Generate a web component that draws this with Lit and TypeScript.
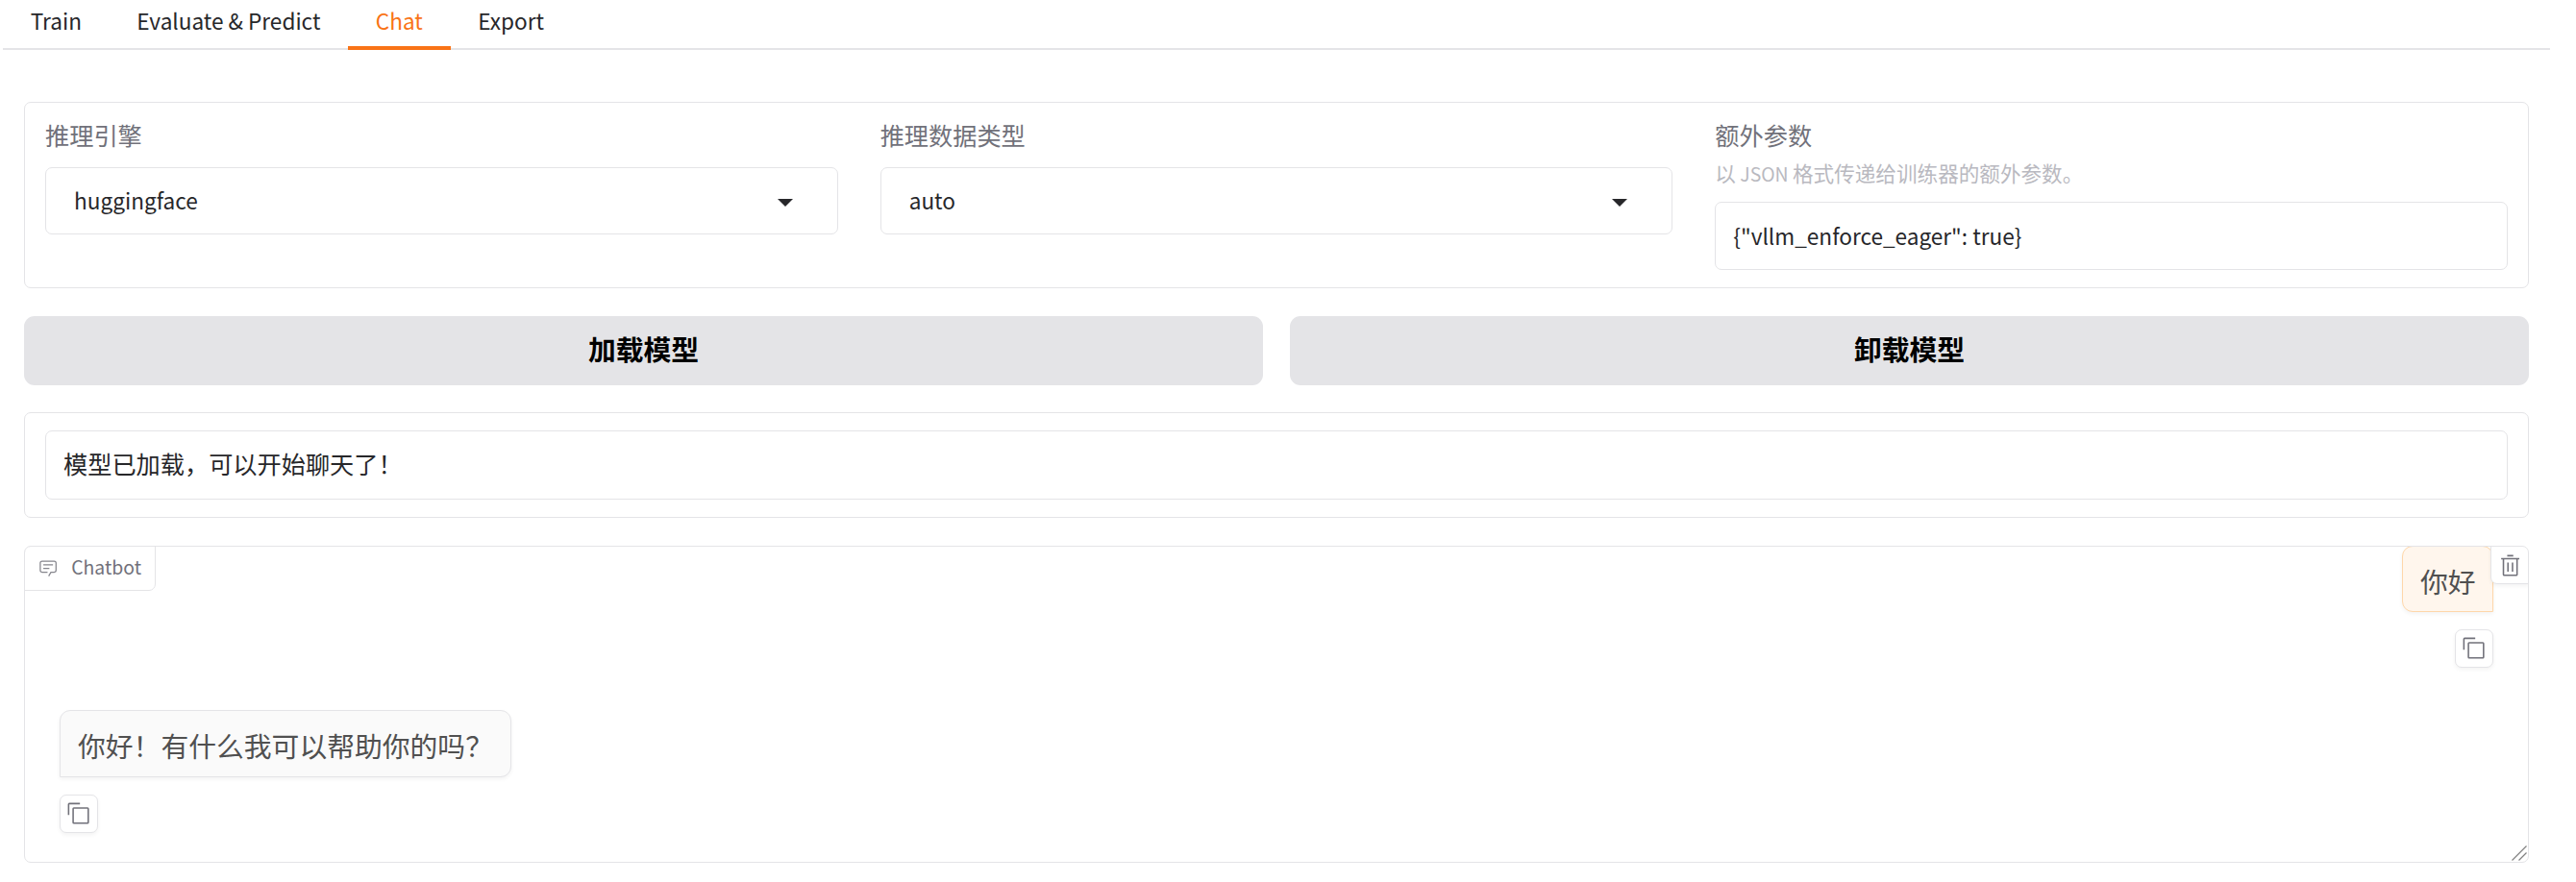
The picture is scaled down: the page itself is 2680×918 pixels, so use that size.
import { LitElement, html, svg, css } from 'lit';
import { customElement, property, state } from 'lit/decorators.js';
import { classMap } from 'lit/directives/class-map.js';

const ICONS = {
  chat: svg`
    <path d="M17.74 30L16 29l4-7h6a2 2 0 0 0 2-2V8a2 2 0 0 0-2-2H6a2 2 0 0 0-2 2v12a2 2 0 0 0 2 2h9v2H6a4 4 0 0 1-4-4V8a4 4 0 0 1 4-4h20a4 4 0 0 1 4 4v12a4 4 0 0 1-4 4h-4.84Z"/>
    <path d="M8 10h16v2H8zm0 6h10v2H8z"/>`,
  trash: svg`
    <path d="M12 12h2v12h-2zm6 0h2v12h-2z"/>
    <path d="M4 6v2h2v20a2 2 0 0 0 2 2h16a2 2 0 0 0 2-2V8h2V6zm4 22V8h16v20zm4-26h8v2h-8z"/>`,
  copy: svg`
    <path d="M28 10v18H10V10h18m0-2H10a2 2 0 0 0-2 2v18a2 2 0 0 0 2 2h18a2 2 0 0 0 2-2V10a2 2 0 0 0-2-2Z"/>
    <path d="M4 18H2V4a2 2 0 0 1 2-2h14v2H4Z"/>`
};

/**
 * Filled 32x32 grid icon, sized by its host
 */
@customElement('ui-icon')
class UiIcon extends LitElement {
  @property() name: keyof typeof ICONS = 'copy';

  static styles = css`
    :host {
      display: block;
      width: 25.2px;
      height: 25.2px;
    }

    svg {
      display: block;
      width: 100%;
      height: 100%;
    }
  `;

  render() {
    return html`<svg viewBox="0 0 32 32" fill="currentColor">${ICONS[this.name]}</svg>`;
  }
}

/**
 * Labelled form field, either a dropdown or a plain text box
 */
@customElement('form-field')
class FormField extends LitElement {
  @property() label = '';
  @property() value = '';
  @property({ type: Boolean }) dropdown = false;

  static styles = css`
    :host {
      display: block;
      min-width: 0;
    }

    .label {
      height: 26px;
      margin-bottom: 19px;
      font-size: 25.2px;
      line-height: 23px;
      color: var(--label);
    }

    .label.with-info {
      margin-bottom: 0;
    }

    .info {
      display: block;
      height: 55px;
      font-size: 21.6px;
      line-height: 50px;
      color: var(--info);
    }

    .box {
      display: flex;
      align-items: center;
      justify-content: space-between;
      box-sizing: border-box;
      height: 70px;
      padding: 0 18px;
      border: 1px solid var(--border);
      border-radius: 7px;
      font-size: var(--latin-md);
      color: var(--text);
    }

    .box.dropdown {
      padding: 0 46px 1px 29px;
    }

    .box.tall {
      height: 71px;
    }

    .box.cjk {
      height: 72px;
      padding-bottom: 5px;
      font-size: 25.2px;
    }

    .caret {
      width: 16px;
      height: 8px;
      margin-top: 5px;
    }
  `;

  render() {
    const hasInfo = this.querySelector('[slot=info]') !== null;
    const cjk = /[\u4e00-\u9fff]/.test(this.value);
    return html`
      ${this.label ? html`
        <div class=${classMap({ label: true, 'with-info': hasInfo })}>${this.label}</div>
      ` : ''}
      ${hasInfo ? html`<div class="info"><slot name="info"></slot></div>` : ''}
      <div class=${classMap({ box: true, dropdown: this.dropdown, tall: hasInfo, cjk })}>
        <span>${this.value}</span>
        ${this.dropdown ? html`
          <svg class="caret" viewBox="0 0 16 8" fill="currentColor"><path d="M0 0h16l-8 8z"/></svg>
        ` : ''}
      </div>
    `;
  }
}

/**
 * One chat bubble with its copy button
 */
@customElement('chat-message')
class ChatMessage extends LitElement {
  @property() text = '';
  @property() role = 'bot';

  static styles = css`
    .message {
      display: flex;
      flex-direction: column;
      align-items: flex-start;
      gap: 18px;
    }

    .message.user {
      align-items: flex-end;
    }

    .bubble {
      box-sizing: border-box;
      height: 70px;
      padding: 0 18px;
      border: 1px solid var(--border);
      border-radius: 11px 11px 11px 0;
      background: #fafafa;
      box-shadow: 0 2px 4px rgba(0, 0, 0, 0.05);
      font-size: 28.8px;
      line-height: 71px;
      color: #505050;
    }

    .user .bubble {
      height: 69px;
      padding: 0 17.5px;
      border-color: #fed7aa;
      border-radius: 11px 11px 0 11px;
      background: #fff6ed;
    }

    .copy {
      display: flex;
      align-items: center;
      justify-content: center;
      box-sizing: border-box;
      width: 40px;
      height: 40px;
      padding: 0;
      border: 1px solid var(--border);
      border-radius: 7px;
      background: #fff;
      box-shadow: 0 2px 4px rgba(0, 0, 0, 0.05);
      color: var(--label);
    }
  `;

  render() {
    return html`
      <div class="message ${this.role}">
        <div class="bubble">${this.text}</div>
        <button class="copy"><ui-icon name="copy"></ui-icon></button>
      </div>
    `;
  }
}

@customElement('app-root')
class AppRoot extends LitElement {
  @state() private activeTab = 'Chat';

  private tabs = ['Train', 'Evaluate & Predict', 'Chat', 'Export'];

  static styles = css`
    :host {
      --text: #27272a;
      --label: #71717a;
      --info: #b9b9c0;
      --border: #e4e4e7;
      --accent: #f97316;
      --latin-md: 22.6px;
      --latin-sm: 19.4px;
      display: block;
      box-sizing: border-box;
      height: 918px;
      overflow: hidden;
      background: #fff;
      font-family: 'Noto Sans CJK SC', sans-serif;
      color: var(--text);
    }

    button {
      font-family: inherit;
    }

    .tabs {
      display: flex;
      box-sizing: border-box;
      height: 52px;
      margin-left: 3px;
      margin-right: 27px;
      box-shadow: inset 0 -2px var(--border);
    }

    .tab {
      box-sizing: border-box;
      height: 52px;
      padding: 0 28.7px 4px;
      border: none;
      border-bottom: 4px solid transparent;
      background: none;
      font-size: var(--latin-md);
      line-height: 44px;
      color: var(--text);
    }

    .tab.selected {
      border-bottom-color: var(--accent);
      color: var(--accent);
    }

    .page {
      display: flex;
      flex-direction: column;
      padding: 54px 49px 0 25px;
    }

    .panel {
      box-sizing: border-box;
      border: 1px solid var(--border);
      border-radius: 7px;
    }

    .options {
      display: grid;
      grid-template-columns: repeat(3, 1fr);
      gap: 44px;
      height: 194px;
      padding: 22px 21px 0;
    }

    .actions {
      display: grid;
      grid-template-columns: 1fr 1fr;
      gap: 28px;
      margin: 29px 0 28px;
    }

    .action {
      height: 72px;
      padding: 0 0 5px;
      border: none;
      border-radius: 11px;
      background: #e4e4e7;
      font-size: 28.8px;
      font-weight: 700;
      color: #000;
    }

    .status {
      height: 110px;
      padding: 18px 21px;
    }

    .chatbot {
      position: relative;
      height: 330px;
      margin-top: 29px;
      overflow: hidden;
    }

    .chat-label {
      position: absolute;
      top: -1px;
      left: -1px;
      display: flex;
      align-items: center;
      gap: 14px;
      box-sizing: border-box;
      height: 47px;
      padding: 0 14px;
      border: 1px solid var(--border);
      border-radius: 7px 0 7px 0;
      font-size: var(--latin-sm);
      line-height: 42px;
      color: var(--label);
    }

    .chat-label span {
      padding-bottom: 3px;
    }

    .chat-label ui-icon {
      width: 20.2px;
      height: 20.2px;
      opacity: 0.85;
    }

    .clear {
      position: absolute;
      top: -1px;
      right: -1px;
      display: flex;
      align-items: center;
      justify-content: center;
      box-sizing: border-box;
      width: 40px;
      height: 40px;
      padding: 2px 0 0 1px;
      border: 1px solid var(--border);
      border-radius: 0 7px 0 7px;
      background: #fff;
      box-shadow: 0 2px 4px rgba(0, 0, 0, 0.05);
      color: var(--label);
    }

    .messages {
      display: flex;
      flex-direction: column;
      gap: 44px;
      margin-top: -1px;
      padding: 0 36px;
    }

    .resize {
      position: absolute;
      right: 0;
      bottom: 0;
      width: 18px;
      height: 18px;
    }

    .latin {
      font-size: var(--latin-sm);
    }
  `;

  private selectTab(tab: string) {
    this.activeTab = tab;
  }

  render() {
    return html`
      <nav class="tabs">
        ${this.tabs.map(tab => html`
          <button
            class=${classMap({ tab: true, selected: tab === this.activeTab })}
            @click=${() => this.selectTab(tab)}
          >${tab}</button>
        `)}
      </nav>

      <main class="page">
        <section class="panel options">
          <form-field label="推理引擎" value="huggingface" dropdown></form-field>
          <form-field label="推理数据类型" value="auto" dropdown></form-field>
          <form-field label="额外参数" value='{"vllm_enforce_eager": true}'>
            <span slot="info">以<span class="latin"> JSON </span>格式传递给训练器的额外参数。</span>
          </form-field>
        </section>

        <div class="actions">
          <button class="action">加载模型</button>
          <button class="action">卸载模型</button>
        </div>

        <section class="panel status">
          <form-field value="模型已加载，可以开始聊天了！"></form-field>
        </section>

        <section class="panel chatbot">
          <div class="messages">
            <chat-message role="user" text="你好"></chat-message>
            <chat-message role="bot" text="你好！有什么我可以帮助你的吗？"></chat-message>
          </div>
          <div class="chat-label"><ui-icon name="chat"></ui-icon><span>Chatbot</span></div>
          <button class="clear"><ui-icon name="trash"></ui-icon></button>
          <svg class="resize" viewBox="0 0 18 18" fill="none" stroke="#808080" stroke-width="1.2">
            <path d="M1.5 16.5l15-15M8.5 16.5l8-8"/>
          </svg>
        </section>
      </main>
    `;
  }
}
